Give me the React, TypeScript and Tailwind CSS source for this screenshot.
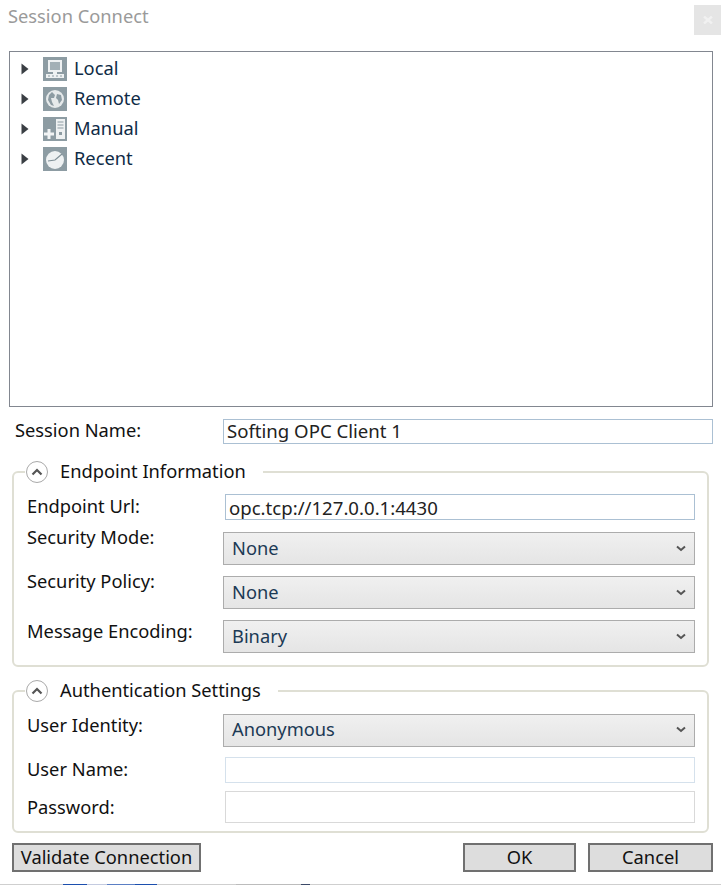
const labelFont = "font-['Noto_Sans',sans-serif] text-[18.3px] leading-[24px]";

const Caret = () => (
  <svg width="8" height="12" viewBox="0 0 8 12" className="shrink-0">
    <path d="M0.5 0.5 L7.5 6 L0.5 11.5 Z" fill="#3a3f44" />
  </svg>
);

const IconTile = ({ children }: { children: React.ReactNode }) => (
  <svg width="24" height="24" viewBox="0 0 24 24" className="shrink-0">
    <rect width="24" height="24" fill="#8d9ca3" />
    {children}
  </svg>
);

const LocalIcon = () => (
  <IconTile>
    <rect x="5" y="3" width="14" height="12" fill="#eef1f2" />
    <rect x="7" y="5" width="10" height="8" fill="#a3b0b6" />
    <rect x="10" y="15" width="4" height="2" fill="#eef1f2" />
    <rect x="3" y="17" width="18" height="4" fill="#eef1f2" />
    <path d="M5 19h2M9 19h2M13 19h2M17 19h2" stroke="#8d9ca3" strokeWidth="1" />
  </IconTile>
);

const RemoteIcon = () => (
  <IconTile>
    <circle cx="12" cy="12" r="9" fill="#e6eaeb" />
    <path d="M9 5 L12 8 L11 11 L8 11 L9 15 L11 19 L8 18 L5 13 L6 8 Z" fill="#8d9ca3" />
    <path d="M14 7 L18 8 L19 13 L16 17 L15 13 L13 11 Z" fill="#8d9ca3" />
  </IconTile>
);

const ManualIcon = () => (
  <IconTile>
    <path d="M1 17h10M6 12v10" stroke="#f2f4f5" strokeWidth="3" />
    <rect x="13" y="2" width="9" height="20" fill="#eef1f2" />
    <path d="M14.5 5h6M14.5 8h6M14.5 11h6" stroke="#8d9ca3" strokeWidth="1" />
    <rect x="16" y="15" width="3" height="3" fill="#8d9ca3" />
  </IconTile>
);

const RecentIcon = () => (
  <IconTile>
    <circle cx="12" cy="13" r="9" fill="#eef1f2" />
    <path d="M5 14 L12 13 L19 7" stroke="#7f8f96" strokeWidth="1.2" fill="none" />
  </IconTile>
);

const nodes = [
  { name: "Local", icon: <LocalIcon /> },
  { name: "Remote", icon: <RemoteIcon /> },
  { name: "Manual", icon: <ManualIcon /> },
  { name: "Recent", icon: <RecentIcon /> },
];

const Collapse = () => (
  <span className="flex size-[22px] items-center justify-center rounded-full border border-[#a9a9a9] bg-white">
    <svg width="12" height="8" viewBox="0 0 12 8">
      <path d="M1.5 6.5 L6 2 L10.5 6.5" stroke="#555" strokeWidth="2.2" fill="none" />
    </svg>
  </span>
);

const Select = ({ value, className }: { value: string; className?: string }) => (
  <div
    className={`flex h-[33px] w-[472px] items-center justify-between border border-[#acacac] bg-gradient-to-b from-[#f0f0f0] to-[#e5e5e5] pl-[8px] pr-[8px] text-[#1c3a55] ${className ?? ""}`}
  >
    <span className="mb-[2px]">{value}</span>
    <svg width="10" height="7" viewBox="0 0 10 7">
      <path d="M1 1.5 L5 5 L9 1.5" stroke="#555" strokeWidth="2" fill="none" />
    </svg>
  </div>
);

const Group = ({ title, children, className }: { title: string; children: React.ReactNode; className?: string }) => (
  <fieldset className={`ml-[12px] w-[697px] rounded-[6px] border-2 border-[#dfdfd4] pl-[13px] ${className ?? ""}`}>
    <legend className="ml-[-2px] flex h-[24px] items-center gap-[12px] pl-[1px] pr-[17px] text-[#111]">
      <Collapse />
      <span className="mb-[2px]">{title}</span>
    </legend>
    {children}
  </fieldset>
);

const Button = ({ label, className }: { label: string; className: string }) => (
  <button className={`h-[29px] border-2 border-[#707070] bg-[#dddddd] pb-[6px] text-[#111] ${className}`}>{label}</button>
);

export default function App() {
  return (
    <div className={`relative h-[885px] w-[721px] overflow-hidden bg-white ${labelFont}`}>
      <div className="flex h-[51px] items-start justify-between">
        <span className="ml-[8px] mt-[4px] text-[#9a9a9a]">Session Connect</span>
        <div className="mt-[5px] flex h-[30px] w-[27px] items-center justify-center bg-[#e5e5e5]">
          <svg width="10" height="8" viewBox="0 0 10 8">
            <path d="M1 0.5 L9 7.5 M9 0.5 L1 7.5" stroke="#f1f1f1" strokeWidth="2.4" />
          </svg>
        </div>
      </div>

      <div className="ml-[9px] flex h-[356px] w-[704px] flex-col border border-[#828790] pl-[11px] pt-[2px]">
        {nodes.map((n) => (
          <div key={n.name} className="flex h-[30px] items-center text-[#0f2b46]">
            <Caret />
            <span className="ml-[14px] mr-[7px]">{n.icon}</span>
            <span className="mb-[2px]">{n.name}</span>
          </div>
        ))}
      </div>

      <div className="mt-[12px] flex h-[25px] items-center">
        <span className="mb-[3px] ml-[15px] w-[208px] text-[#111]">Session Name:</span>
        <input readOnly value="Softing OPC Client 1" className="h-[25px] w-[490px] border border-[#abc0d3] pb-[2px] pl-[3px] text-[18.6px] text-[#222] outline-none" />
      </div>

      <Group title="Endpoint Information" className="mt-[16px] h-[207px]">
        <div className="mt-[10px] flex h-[26px] items-center">
          <span className="mb-[2px] w-[198px] text-[#111]">Endpoint Url:</span>
          <input readOnly value="opc.tcp://127.0.0.1:4430" className="h-[26px] w-[470px] border border-[#abc0d3] pl-[3px] text-[18.6px] text-[#222] outline-none" />
        </div>
        <div className="mt-[12px] flex h-[33px] items-start">
          <span className="-mt-[7px] w-[196px] text-[#111]">Security Mode:</span>
          <Select value="None" />
        </div>
        <div className="mt-[11px] flex h-[33px] items-start">
          <span className="-mt-[7px] w-[196px] text-[#111]">Security Policy:</span>
          <Select value="None" />
        </div>
        <div className="mt-[11px] flex h-[33px] items-center">
          <span className="mb-[12px] w-[196px] text-[#111]">Message Encoding:</span>
          <Select value="Binary" />
        </div>
      </Group>

      <Group title="Authentication Settings" className="mt-[12px] h-[154px]">
        <div className="mt-[11px] flex h-[31px] items-start">
          <span className="-mt-[1px] w-[196px] text-[#111]">User Identity:</span>
          <Select value="Anonymous" className="h-[31px] pb-[2px]" />
        </div>
        <div className="mt-[12px] flex h-[26px] items-center">
          <span className="mb-[2px] w-[198px] text-[#111]">User Name:</span>
          <input readOnly className="h-[26px] w-[470px] border border-[#d5e1ec] outline-none" />
        </div>
        <div className="mt-[8px] flex h-[32px] items-center">
          <span className="w-[198px] text-[#111]">Password:</span>
          <input readOnly className="h-[32px] w-[470px] border border-[#d9d9d9] outline-none" />
        </div>
      </Group>

      <div className="ml-[12px] mt-[10px] flex w-[701px] items-center">
        <Button label="Validate Connection" className="w-[189px]" />
        <Button label="OK" className="ml-auto w-[113px]" />
        <Button label="Cancel" className="ml-[12px] w-[125px]" />
      </div>

      {/* sliver of the desktop behind the dialog */}
      <div className="mt-[12px] flex h-[2px] bg-[#cfcfcf]">
        <div className="ml-[63px] h-full w-[24px] bg-[#1c4fae]" />
        <div className="h-full w-[20px] bg-[#c4cbe0]" />
        <div className="h-full w-[28px] bg-[#5b7fc4]" />
        <div className="h-full w-[22px] bg-[#1c4fae]" />
        <div className="ml-[79px] h-full w-[65px] bg-[#bcbcbc]" />
        <div className="h-full w-[9px] bg-[#3c4a68]" />
      </div>
    </div>
  );
}
